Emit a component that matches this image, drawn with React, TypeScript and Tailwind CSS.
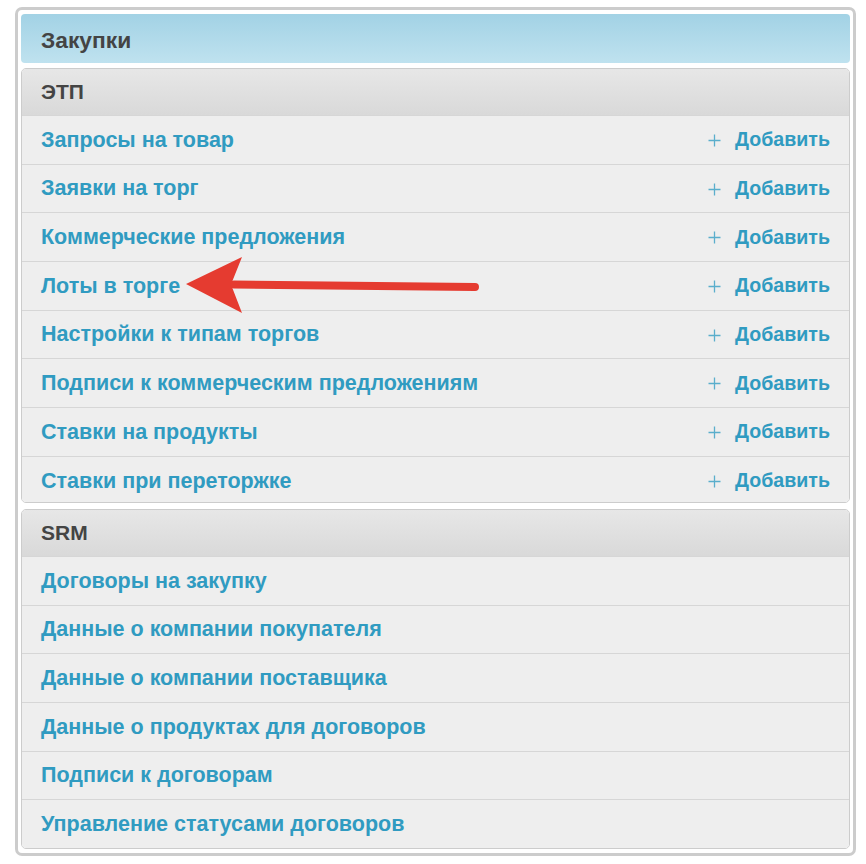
import React from "react";

const etp = [
  "Запросы на товар",
  "Заявки на торг",
  "Коммерческие предложения",
  "Лоты в торге",
  "Настройки к типам торгов",
  "Подписи к коммерческим предложениям",
  "Ставки на продукты",
  "Ставки при переторжке",
];

const srm = [
  "Договоры на закупку",
  "Данные о компании покупателя",
  "Данные о компании поставщика",
  "Данные о продуктах для договоров",
  "Подписи к договорам",
  "Управление статусами договоров",
];

function Row({ label, add }: { label: string; add: boolean }) {
  return (
    <div className="flex h-[48.7px] items-center justify-between border-t border-[#d6d6d6] bg-[#eeeeee] pl-[19px] pr-[19px]">
      <span className="text-[21.5px] font-bold text-[#309bc1]">{label}</span>
      {add && (
        <span className="flex items-center gap-[14px]">
          <svg width="13" height="13" viewBox="0 0 13 13" className="mt-[1px]">
            <path d="M6.5 0.5v12M0.5 6.5h12" stroke="#5aaecc" strokeWidth="1.3" />
          </svg>
          <span className="text-[19.6px] font-bold text-[#309bc1]">Добавить</span>
        </span>
      )}
    </div>
  );
}

function Module({ title, items, add }: { title: string; items: string[]; add: boolean }) {
  return (
    <div className="overflow-hidden rounded-[5px] border border-[#cccccc]">
      <div className="flex h-[46px] items-center bg-gradient-to-b from-[#e7e7e7] to-[#d9d9d9] pl-[19px]">
        <span className="text-[21px] font-bold text-[#444444]">{title}</span>
      </div>
      {items.map((l) => (
        <Row key={l} label={l} add={add} />
      ))}
    </div>
  );
}

export default function App() {
  return (
    <div
      className="relative h-[864px] w-[866px] bg-white pl-[15px] pt-[7px]"
      style={{ fontFamily: '"Liberation Sans", Arial, sans-serif' }}
    >
      <div className="flex h-[849px] w-[841px] flex-col gap-[5px] rounded-[7px] border-[3px] border-[#cccccc] px-[3px] pb-[4px] pt-[4px]">
        <div className="flex h-[49px] shrink-0 items-center rounded-[4px] bg-gradient-to-b from-[#a2d2e5] to-[#bfe2ef] pl-[20px] pt-[3px]">
          <span className="text-[22.8px] font-bold text-[#444444]">Закупки</span>
        </div>
        <Module title="ЭТП" items={etp} add={true} />
        <div className="mt-[1px]">
          <Module title="SRM" items={srm} add={false} />
        </div>
      </div>
      <svg className="pointer-events-none absolute left-0 top-0" width="866" height="864">
        <polygon points="186,284 242,257 231,284.5 242,313" fill="#e53b30" />
        <line x1="234" y1="284.5" x2="475" y2="287" stroke="#e53b30" strokeWidth="8" strokeLinecap="round" />
      </svg>
    </div>
  );
}
